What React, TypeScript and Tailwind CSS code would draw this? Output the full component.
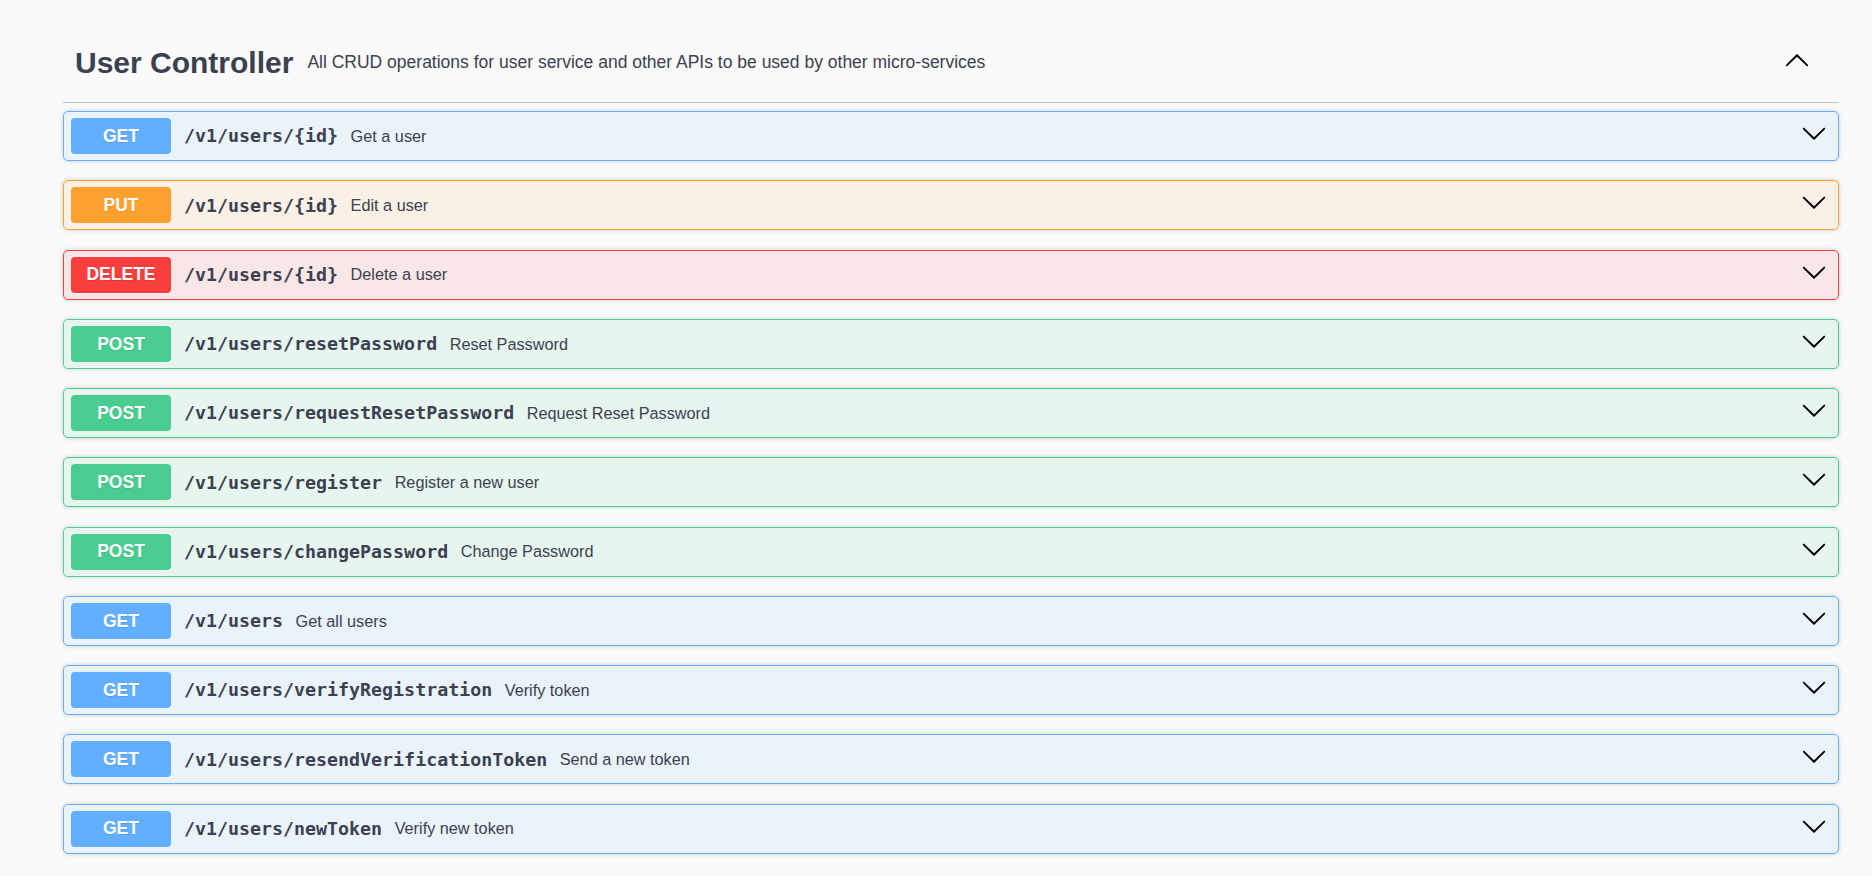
import React from "react"

type Method = "GET" | "PUT" | "DELETE" | "POST"

const styles: Record<Method, { row: string; badge: string }> = {
    GET: { row: "border-[#61affe] bg-[#61affe]/10", badge: "bg-[#61affe]" },
    PUT: { row: "border-[#fca130] bg-[#fca130]/10", badge: "bg-[#fca130]" },
    DELETE: { row: "border-[#f93e3e] bg-[#f93e3e]/10", badge: "bg-[#f93e3e]" },
    POST: { row: "border-[#49cc90] bg-[#49cc90]/10", badge: "bg-[#49cc90]" },
}

const ops: { method: Method; path: string; summary: string }[] = [
    { method: "GET", path: "/v1/users/{id}", summary: "Get a user" },
    { method: "PUT", path: "/v1/users/{id}", summary: "Edit a user" },
    { method: "DELETE", path: "/v1/users/{id}", summary: "Delete a user" },
    { method: "POST", path: "/v1/users/resetPassword", summary: "Reset Password" },
    { method: "POST", path: "/v1/users/requestResetPassword", summary: "Request Reset Password" },
    { method: "POST", path: "/v1/users/register", summary: "Register a new user" },
    { method: "POST", path: "/v1/users/changePassword", summary: "Change Password" },
    { method: "GET", path: "/v1/users", summary: "Get all users" },
    { method: "GET", path: "/v1/users/verifyRegistration", summary: "Verify token" },
    { method: "GET", path: "/v1/users/resendVerificationToken", summary: "Send a new token" },
    { method: "GET", path: "/v1/users/newToken", summary: "Verify new token" },
]

const Arrow = ({ up = false, className = "" }: { up?: boolean; className?: string }) => (
    <svg viewBox="0 0 20 20" width="26" height="26" className={`${up ? "rotate-180" : ""} ${className}`}>
        <path
            fill="#000"
            d="M17.418 6.109c.272-.268.709-.268.979 0s.271.701 0 .969l-7.908 7.83c-.27.268-.707.268-.979 0l-7.908-7.83c-.27-.268-.27-.701 0-.969.271-.268.709-.268.979 0L10 13.25l7.418-7.141z"
        />
    </svg>
)

export default function App() {
    return (
        <div className="min-h-screen bg-[#fafafa] pl-[63px] pr-[33px] pt-[23px] text-[#3b4151] font-['Liberation_Sans',Arial,sans-serif]">
            {/* tag header */}
            <div className="flex h-[80px] items-center border-b border-[#3b4151]/30 pl-[12px] pr-[29px]">
                <h3 className="text-[30px] font-bold leading-none">User Controller</h3>
                <span className="ml-[14px] text-[17.5px]">
                    All CRUD operations for user service and other APIs to be used by other micro-services
                </span>
                <Arrow up className="ml-auto mb-[3px]" />
            </div>

            <div className="mt-[8px] flex flex-col gap-[19.25px]">
                {ops.map((op, i) => (
                    <div
                        key={i}
                        className={`flex h-[50px] items-center rounded-[5px] border pl-[7px] pr-[11px] shadow-[0_0_4px_rgba(0,0,0,0.19)] ${styles[op.method].row}`}
                    >
                        <span
                            className={`flex h-[36px] w-[100px] items-center justify-center rounded-[4px] text-[17.5px] font-bold text-white [text-shadow:0_1px_0_rgba(0,0,0,0.1)] ${styles[op.method].badge}`}
                        >
                            {op.method}
                        </span>
                        <span className="ml-[13px] font-['DejaVu_Sans_Mono',monospace] text-[18.3px] font-bold">
                            {op.path}
                        </span>
                        <span className="ml-[12.5px] text-[16.25px]">{op.summary}</span>
                        <Arrow className="ml-auto mb-[6px]" />
                    </div>
                ))}
            </div>
        </div>
    )
}
